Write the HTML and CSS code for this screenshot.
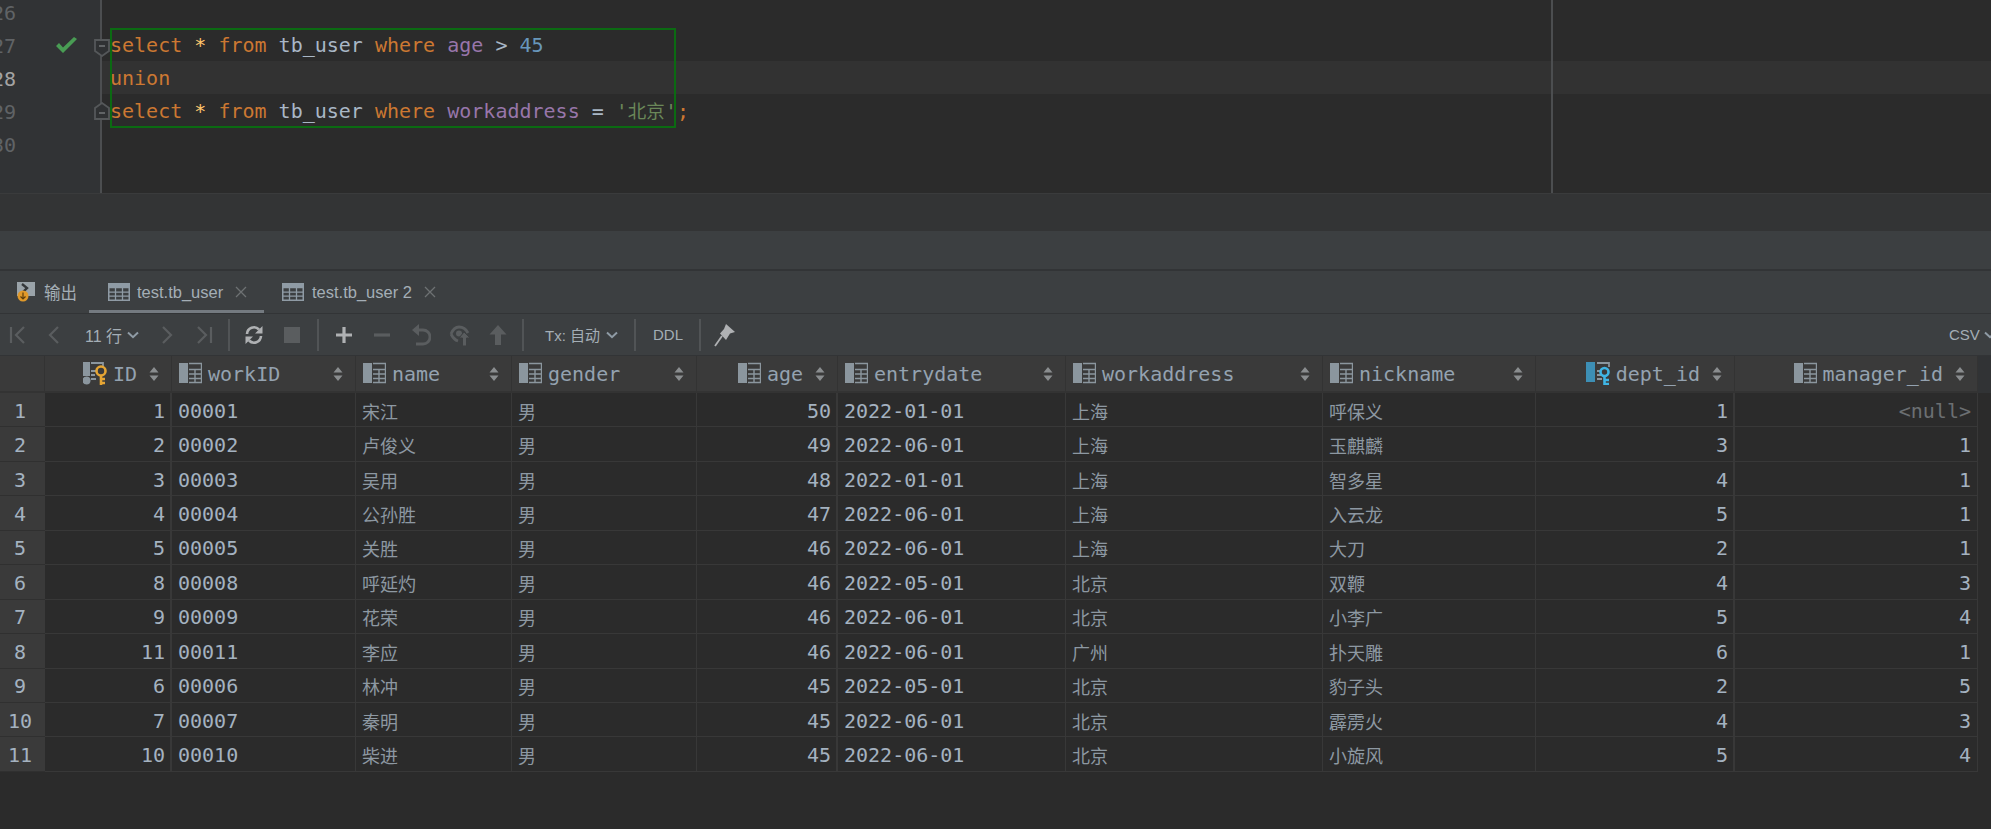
FILE: index.html
```html
<!DOCTYPE html>
<html lang="zh">
<head>
<meta charset="utf-8">
<title>test.tb_user</title>
<link rel="stylesheet" href="styles.css">
</head>
<body>
<svg class="defs" width="0" height="0" aria-hidden="true">
  <symbol id="col" viewBox="0 0 23 23">
    <rect x="0" y="1" width="9" height="20" fill="#8b969e"/>
    <path d="M10 1.5H22.5V20.5H10M10 7.5H22.5M10 12H22.5M10 16.5H22.5M16 7.5V20.5" fill="none" stroke="#8b969e" stroke-width="1.4"/>
  </symbol>
  <symbol id="tbl" viewBox="0 0 22 18">
    <rect x="0.75" y="0.75" width="20.5" height="16.5" fill="none" stroke="#8f9ba5" stroke-width="1.5"/>
    <rect x="0.75" y="0.75" width="20.5" height="4.5" fill="#8f9ba5"/>
    <path d="M0 9.2H22M0 13.2H22M7.5 5V18M14.5 5V18" stroke="#8f9ba5" stroke-width="1.3"/>
  </symbol>
  <symbol id="sort" viewBox="0 0 10 16">
    <path d="M5 1L9.5 6.5H.5ZM5 15L.5 9.5H9.5Z" fill="#8a8d8f"/>
  </symbol>
  <symbol id="x" viewBox="0 0 12 12">
    <path d="M1 1L11 11M11 1L1 11" stroke="#6e7173" stroke-width="1.3"/>
  </symbol>
  <symbol id="chev" viewBox="0 0 12 8">
    <path d="M1 1.5L6 6.2L11 1.5" fill="none" stroke="#8f9ba5" stroke-width="2"/>
  </symbol>
</svg>

<section class="editor">
  <div class="gutter">
    <div class="num">26</div>
    <div class="num">27<svg class="check" width="23" height="17" viewBox="0 0 23 17"><path d="M1 9L8 16L22 2L19 0L8 10.5L4 6Z" fill="#499c54"/></svg><svg class="fold" width="16" height="18" viewBox="0 0 16 18"><path d="M1 1H15V12L8 17L1 12Z" fill="#2f3133" stroke="#55585a" stroke-width="1.8"/><path d="M5 7H11" stroke="#6f7274" stroke-width="1.6"/></svg></div>
    <div class="num cur">28</div>
    <div class="num">29<svg class="fold fold-up" width="16" height="18" viewBox="0 0 16 18"><path d="M1 17H15V6L8 1L1 6Z" fill="#2f3133" stroke="#55585a" stroke-width="1.8"/><path d="M5 11H11" stroke="#6f7274" stroke-width="1.6"/></svg></div>
    <div class="num">30</div>
  </div>
  <div class="code">
    <div class="line"></div>
    <div class="line"><span class="k">select</span> <span class="s">*</span> <span class="k">from</span> <span class="p">tb_user</span> <span class="k">where</span> <span class="f">age</span> <span class="p">&gt;</span> <span class="n">45</span></div>
    <div class="line band"><span class="k">union</span></div>
    <div class="line"><span class="k">select</span> <span class="s">*</span> <span class="k">from</span> <span class="p">tb_user</span> <span class="k">where</span> <span class="f">workaddress</span> <span class="p">=</span> <span class="t">'<span class="han">北京</span>'</span><span class="k">;</span></div>
    <div class="line"></div>
  </div>
  <div class="selection"></div>
  <div class="margin-line"></div>
</section>

<div class="strip"></div>
<div class="bar"></div>

<nav class="tabs">
  <div class="tab first">
    <svg width="18" height="20" viewBox="0 0 18 20"><rect x="0" y="0" width="18" height="14" fill="#9aa3a9"/><path d="M5 2L10 6L6 10" fill="none" stroke="#34373a" stroke-width="2.4"/><circle cx="6" cy="14" r="5.5" fill="#e0992a"/><path d="M6 10.5V17M3.5 14.5L6 17L8.5 14.5" fill="none" stroke="#5c3d0c" stroke-width="1.2"/></svg>
    <span>输出</span>
  </div>
  <div class="tab active">
    <svg class="tbl-ico" width="22" height="18"><use href="#tbl"/></svg>
    <span>test.tb_user</span>
    <svg class="close" width="12" height="12"><use href="#x"/></svg>
  </div>
  <div class="tab second">
    <svg class="tbl-ico" width="22" height="18"><use href="#tbl"/></svg>
    <span>test.tb_user 2</span>
    <svg class="close" width="12" height="12"><use href="#x"/></svg>
  </div>
</nav>

<div class="toolbar">
  <div class="tool w36"><svg width="20" height="20" viewBox="0 0 20 20"><path d="M3 2V18M16 2L8 10L16 18" fill="none" stroke="#5a5d5f" stroke-width="2.2"/></svg></div>
  <div class="tool"><svg width="20" height="20" viewBox="0 0 20 20"><path d="M13 2L5 10L13 18" fill="none" stroke="#5a5d5f" stroke-width="2.2"/></svg></div>
  <div class="label pager">11 行<svg class="chev" width="12" height="8"><use href="#chev"/></svg></div>
  <div class="tool"><svg width="20" height="20" viewBox="0 0 20 20"><path d="M7 2L15 10L7 18" fill="none" stroke="#5a5d5f" stroke-width="2.2"/></svg></div>
  <div class="tool"><svg width="20" height="20" viewBox="0 0 20 20"><path d="M4 2L12 10L4 18M17 2V18" fill="none" stroke="#5a5d5f" stroke-width="2.2"/></svg></div>
  <div class="sep"></div>
  <div class="tool"><svg width="20" height="20" viewBox="0 0 20 20"><path d="M3 9A7 7 0 0 1 15 4.5M17 11A7 7 0 0 1 5 15.5" fill="none" stroke="#afb1b3" stroke-width="2.6"/><path d="M18.500 1V8.500H11ZM1.500 19V11.500H9Z" fill="#afb1b3"/></svg></div>
  <div class="tool"><svg width="16" height="16" viewBox="0 0 16 16"><rect width="16" height="16" fill="#5a5d5f"/></svg></div>
  <div class="sep wide"></div>
  <div class="tool"><svg width="18" height="18" viewBox="0 0 18 18"><path d="M9 1V17M1 9H17" stroke="#afb1b3" stroke-width="3.2"/></svg></div>
  <div class="tool"><svg width="18" height="18" viewBox="0 0 18 18"><path d="M1 9H17" stroke="#5a5d5f" stroke-width="3.2"/></svg></div>
  <div class="tool w40"><svg width="20" height="22" viewBox="0 0 20 22"><path d="M3 6H12A6.500 6.500 0 0 1 12 20H5" fill="none" stroke="#5a5d5f" stroke-width="2.800"/><path d="M8 0V12L1 6Z" fill="#5a5d5f"/></svg></div>
  <div class="tool"><svg width="22" height="22" viewBox="0 0 22 22"><path d="M2 10C4 5 7 3 10 3S17 5 19 9M2 10C4 14 6 16 9 17" fill="none" stroke="#5a5d5f" stroke-width="2.800"/><circle cx="10" cy="9.500" r="3" fill="#5a5d5f"/><path d="M15 8L21 14H17.500V22H13.500V14H10Z" fill="#5a5d5f" stroke="#3c3f41"/></svg></div>
  <div class="tool"><svg width="20" height="20" viewBox="0 0 20 20"><path d="M10 0L18.500 9.500H13V20H7V9.500H1.500Z" fill="#5a5d5f"/></svg></div>
  <div class="sep"></div>
  <div class="label tx">Tx: 自动<svg class="chev" width="12" height="8"><use href="#chev"/></svg></div>
  <div class="sep"></div>
  <div class="label ddl">DDL</div>
  <div class="sep"></div>
  <div class="tool"><svg width="22" height="24" viewBox="0 0 22 24"><path d="M12 1L21 9L16 10.500L12 17L6 10.500L10 6Z" fill="#afb1b3"/><path d="M8 13L1 23" stroke="#afb1b3" stroke-width="1.800"/></svg></div>
  <div class="label csv">CSV<svg class="chev" width="12" height="8"><use href="#chev"/></svg></div>
</div>

<main class="grid">
  <div class="head">
    <div class="hc corner"></div>
    <div class="hc num-col"><svg class="ico" width="24" height="23" viewBox="0 0 24 23"><rect x="0" y="0" width="7" height="14" fill="#8b969e"/><circle cx="3.500" cy="18.500" r="4" fill="#8b969e"/><path d="M8 1H20V5M8 9H13M8 13H12M8 17H13" fill="none" stroke="#8b969e" stroke-width="1.800"/><circle cx="18" cy="9" r="4.500" fill="none" stroke="#e5a534" stroke-width="2.600"/><path d="M18 13V23M18 17H22M18 21H22" fill="none" stroke="#e5a534" stroke-width="2.600"/></svg><span>ID</span><svg class="sort" width="10" height="16"><use href="#sort"/></svg></div>
    <div class="hc"><svg class="ico" width="23" height="23"><use href="#col"/></svg><span>workID</span><svg class="sort" width="10" height="16"><use href="#sort"/></svg></div>
    <div class="hc"><svg class="ico" width="23" height="23"><use href="#col"/></svg><span>name</span><svg class="sort" width="10" height="16"><use href="#sort"/></svg></div>
    <div class="hc"><svg class="ico" width="23" height="23"><use href="#col"/></svg><span>gender</span><svg class="sort" width="10" height="16"><use href="#sort"/></svg></div>
    <div class="hc num-col"><svg class="ico" width="23" height="23"><use href="#col"/></svg><span>age</span><svg class="sort" width="10" height="16"><use href="#sort"/></svg></div>
    <div class="hc"><svg class="ico" width="23" height="23"><use href="#col"/></svg><span>entrydate</span><svg class="sort" width="10" height="16"><use href="#sort"/></svg></div>
    <div class="hc"><svg class="ico" width="23" height="23"><use href="#col"/></svg><span>workaddress</span><svg class="sort" width="10" height="16"><use href="#sort"/></svg></div>
    <div class="hc"><svg class="ico" width="23" height="23"><use href="#col"/></svg><span>nickname</span><svg class="sort" width="10" height="16"><use href="#sort"/></svg></div>
    <div class="hc num-col"><svg class="ico" width="24" height="23" viewBox="0 0 24 23"><rect x="0" y="0" width="9" height="20" fill="#3d8fb5"/><path d="M11 1H23V5M11 9H15M11 13H15M11 17H16" fill="none" stroke="#8b969e" stroke-width="1.800"/><circle cx="18.500" cy="10" r="4" fill="none" stroke="#3fb5e5" stroke-width="2.600"/><path d="M18.500 14V23M18.500 18H23M18.500 22H23" fill="none" stroke="#3fb5e5" stroke-width="2.600"/></svg><span>dept_id</span><svg class="sort" width="10" height="16"><use href="#sort"/></svg></div>
    <div class="hc num-col"><svg class="ico" width="23" height="23"><use href="#col"/></svg><span>manager_id</span><svg class="sort" width="10" height="16"><use href="#sort"/></svg></div>
  </div>

  <div class="row"><div class="rn">1</div><div class="c r">1</div><div class="c">00001</div><div class="c cj">宋江</div><div class="c cj">男</div><div class="c r">50</div><div class="c">2022-01-01</div><div class="c cj">上海</div><div class="c cj">呼保义</div><div class="c r">1</div><div class="c r nul">&lt;null&gt;</div></div>
  <div class="row"><div class="rn">2</div><div class="c r">2</div><div class="c">00002</div><div class="c cj">卢俊义</div><div class="c cj">男</div><div class="c r">49</div><div class="c">2022-06-01</div><div class="c cj">上海</div><div class="c cj">玉麒麟</div><div class="c r">3</div><div class="c r">1</div></div>
  <div class="row"><div class="rn">3</div><div class="c r">3</div><div class="c">00003</div><div class="c cj">吴用</div><div class="c cj">男</div><div class="c r">48</div><div class="c">2022-01-01</div><div class="c cj">上海</div><div class="c cj">智多星</div><div class="c r">4</div><div class="c r">1</div></div>
  <div class="row"><div class="rn">4</div><div class="c r">4</div><div class="c">00004</div><div class="c cj">公孙胜</div><div class="c cj">男</div><div class="c r">47</div><div class="c">2022-06-01</div><div class="c cj">上海</div><div class="c cj">入云龙</div><div class="c r">5</div><div class="c r">1</div></div>
  <div class="row"><div class="rn">5</div><div class="c r">5</div><div class="c">00005</div><div class="c cj">关胜</div><div class="c cj">男</div><div class="c r">46</div><div class="c">2022-06-01</div><div class="c cj">上海</div><div class="c cj">大刀</div><div class="c r">2</div><div class="c r">1</div></div>
  <div class="row"><div class="rn">6</div><div class="c r">8</div><div class="c">00008</div><div class="c cj">呼延灼</div><div class="c cj">男</div><div class="c r">46</div><div class="c">2022-05-01</div><div class="c cj">北京</div><div class="c cj">双鞭</div><div class="c r">4</div><div class="c r">3</div></div>
  <div class="row"><div class="rn">7</div><div class="c r">9</div><div class="c">00009</div><div class="c cj">花荣</div><div class="c cj">男</div><div class="c r">46</div><div class="c">2022-06-01</div><div class="c cj">北京</div><div class="c cj">小李广</div><div class="c r">5</div><div class="c r">4</div></div>
  <div class="row"><div class="rn">8</div><div class="c r">11</div><div class="c">00011</div><div class="c cj">李应</div><div class="c cj">男</div><div class="c r">46</div><div class="c">2022-06-01</div><div class="c cj">广州</div><div class="c cj">扑天雕</div><div class="c r">6</div><div class="c r">1</div></div>
  <div class="row"><div class="rn">9</div><div class="c r">6</div><div class="c">00006</div><div class="c cj">林冲</div><div class="c cj">男</div><div class="c r">45</div><div class="c">2022-05-01</div><div class="c cj">北京</div><div class="c cj">豹子头</div><div class="c r">2</div><div class="c r">5</div></div>
  <div class="row"><div class="rn">10</div><div class="c r">7</div><div class="c">00007</div><div class="c cj">秦明</div><div class="c cj">男</div><div class="c r">45</div><div class="c">2022-06-01</div><div class="c cj">北京</div><div class="c cj">霹雳火</div><div class="c r">4</div><div class="c r">3</div></div>
  <div class="row"><div class="rn">11</div><div class="c r">10</div><div class="c">00010</div><div class="c cj">柴进</div><div class="c cj">男</div><div class="c r">45</div><div class="c">2022-06-01</div><div class="c cj">北京</div><div class="c cj">小旋风</div><div class="c r">5</div><div class="c r">4</div></div>
</main>
</body>
</html>
```
FILE: styles.css
```css
* { box-sizing: border-box; }
html, body { margin: 0; height: 100%; }
body {
  background: #2b2b2b;
  overflow: hidden;
  color: #a9b7c6;
  font-family: "DejaVu Sans Mono", "Noto Sans CJK SC", monospace;
  font-size: 20px;
}
.defs { position: absolute; }

/* editor */
.editor {
  position: relative;
  display: flex;
  height: 193px;
  overflow: hidden;
  background: #2b2b2b;
}
.gutter {
  width: 102px;
  flex: none;
  margin-top: -5px;
  background: #313335;
  border-right: 2px solid #4c4e50;
}
.num {
  position: relative;
  height: 33px;
  line-height: 33px;
  padding-top: 2px;
  width: 16px;
  display: flex;
  justify-content: flex-end;
  white-space: nowrap;
  color: #606366;
}
.num.cur { color: #a4a3a3; }
.check { position: absolute; left: 55px; top: 9px; }
.fold { position: absolute; left: 94px; top: 11px; }
.fold-up { top: 8px; }
.code { flex: 1; margin-top: -5px; }
.line {
  height: 33px;
  line-height: 33px;
  padding: 1px 0 0 8px;
  white-space: pre;
}
.band { background: #323232; }
.k { color: #cc7832; }
.s { color: #ffc66d; }
.p { color: #a9b7c6; }
.f { color: #9876aa; }
.n { color: #6897bb; }
.t { color: #6a8759; }
.han { font-size: 18.5px; }
.selection {
  position: absolute;
  left: 110px;
  top: 28px;
  width: 566px;
  height: 100px;
  border: 2px solid #0b6a12;
  pointer-events: none;
}
.margin-line {
  position: absolute;
  left: 1551px;
  top: 0;
  bottom: 0;
  width: 2px;
  background: #4c4e50;
}

.strip {
  height: 38px;
  background: #333435;
  border-top: 1px solid #3a3b3c;
}
.bar {
  height: 40px;
  background: #3c3f41;
  border-bottom: 2px solid #323436;
}

/* tabs */
.tabs {
  display: flex;
  height: 42px;
  background: #3c3f41;
  font-family: "Liberation Sans", "Noto Sans CJK SC", sans-serif;
  font-size: 16.5px;
  color: #a4aeb6;
}
.tab {
  display: flex;
  align-items: center;
  height: 42px;
  white-space: nowrap;
}
.tab.first { width: 89px; padding-left: 17px; gap: 9px; }
.tab.active {
  width: 175px;
  padding-left: 19px;
  gap: 7px;
  border-bottom: 3px solid #747a80;
}
.tab.active svg.tbl-ico, .tab.active span { margin-top: 3px; }
.tab.active .close { margin: 3px 0 0 5px; }
.tab.second { padding-left: 18px; gap: 8px; }
.tab.second .close { margin-left: 4px; }

/* toolbar */
.toolbar {
  display: flex;
  align-items: center;
  height: 43px;
  background: #3c3f41;
  border-top: 1px solid #323436;
  border-bottom: 1px solid #323436;
  font-family: "Liberation Sans", "Noto Sans CJK SC", sans-serif;
  font-size: 15px;
  color: #a4aeb6;
}
.tool {
  width: 38px;
  height: 38px;
  flex: none;
  display: flex;
  align-items: center;
  justify-content: center;
}
.tool.w36 { width: 36px; }
.tool.w40 { width: 40px; }
.sep {
  width: 12px;
  height: 32px;
  flex: none;
  display: flex;
  justify-content: center;
}
.sep.wide { width: 14px; }
.sep::before {
  content: "";
  width: 2px;
  background: #515456;
}
.label {
  display: flex;
  align-items: center;
  flex: none;
  white-space: nowrap;
}
.chev { flex: none; margin-left: 4px; }
.pager { width: 73px; padding-left: 11px; font-size: 16px; }
.pager .chev { margin-left: 5px; }
.tx { width: 100px; padding-left: 16px; }
.tx .chev { margin-left: 6px; }
.ddl { width: 53px; padding-left: 12px; }
.csv { margin-left: auto; width: 42px; overflow: hidden; }

/* grid */
.grid { font-size: 20px; }
.head, .row {
  display: grid;
  grid-template-columns: 45px 127px 184px 156px 185px 141px 228px 257px 213px 199px 243px;
  width: 1978px;
}
.head {
  height: 37px;
  background: #3a3a3a;
  border-bottom: 2px solid #333;
  box-shadow: 13px 0 0 #313335;
}
.hc {
  display: flex;
  align-items: center;
  gap: 6px;
  padding: 0 12px 0 7px;
  border-right: 1px solid #333;
  color: #94a2b0;
  white-space: nowrap;
  line-height: 1;
}
.hc .sort { flex: none; margin-left: auto; }
.hc .ico { flex: none; }
.num-col .ico { margin-left: auto; }
.num-col .sort { margin-left: 6px; }
.corner { padding: 0; }
.row { height: 34.45px; }
.c, .rn {
  display: flex;
  align-items: center;
  padding: 2px 6px 0;
  border-right: 1px solid #383838;
  border-bottom: 1px solid #383838;
  white-space: nowrap;
  color: #a4b2c0;
}
.rn {
  justify-content: center;
  padding: 2px 5px 0 0;
  background: #3a3a3a;
  border-right: 0;
  border-bottom-color: #303030;
}
.c.r { justify-content: flex-end; padding-right: 6px; }
.c.cj { font-size: 18px; color: #8d98a2; }
.c.nul { color: #6b6f72; }
.c:nth-child(2), .c:nth-child(6), .c:nth-child(10) { border-right-width: 2px; padding-right: 5px; }
```
